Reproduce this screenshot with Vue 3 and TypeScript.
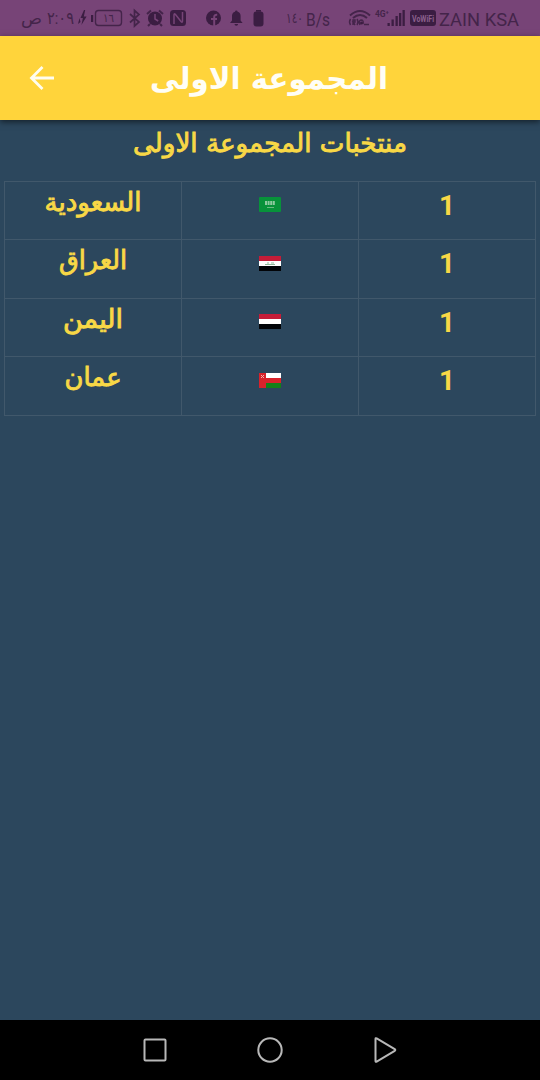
<script setup lang="ts">
interface Team {
  name: string
  width: number
  flag: 'sa' | 'iq' | 'ye' | 'om'
  count: number
}

const teams: Team[] = [
  { name: 'السعودية', width: 97, flag: 'sa', count: 1 },
  { name: 'العراق', width: 68, flag: 'iq', count: 1 },
  { name: 'اليمن', width: 60, flag: 'ye', count: 1 },
  { name: 'عمان', width: 57, flag: 'om', count: 1 },
]
</script>

<template>
  <div class="screen">
    <div class="status">
      <svg class="cluster" width="180" height="36" viewBox="10 0 180 36">
        <text x="21" y="24" font-size="17" textLength="21" lengthAdjust="spacingAndGlyphs">ص</text>
        <text x="47" y="24" font-size="17" textLength="27" lengthAdjust="spacingAndGlyphs" direction="ltr">٢:٠٩</text>
        <path class="solid" d="M84 10l-3.500 8h2.400l-1.500 7 5.200-8.500h-2.800l1.400-6.500zM79.500 18l-1.500 6 2.500-2z" />
        <path class="solid" d="M91 15h2.200v7H91z" />
        <rect class="line" x="95.500" y="10.500" width="26" height="15" rx="3" />
        <text x="103" y="22" font-size="12" textLength="11" lengthAdjust="spacingAndGlyphs">١٦</text>
        <path class="line bold" d="M130 14l9 8-4.500 4V10.500l4.500 4-9 8" />
        <circle class="solid" cx="155" cy="18.500" r="7" />
        <path class="line thick" d="M147 14l4-3.500M163 14l-4-3.500M150 24l-2 2M160 24l2 2" />
        <path class="cut" d="M155 14v5l3.200 2" />
        <rect class="solid" x="170" y="10" width="16" height="16" rx="3.500" />
        <path class="cut" d="M174 24v-9q0-2 1.500-.5l5.500 7q1.500 1.500 1.500-.5v-9" />
      </svg>
      <svg class="cluster" width="70" height="36" viewBox="200 0 70 36">
        <circle class="solid" cx="213.500" cy="18" r="7.500" />
        <path class="cut thick" d="M214.200 26v-9q0-2.500 3-2.300M211 19h6" />
        <path class="solid" d="M230 23l2-2.500V16q0-3.500 3-4.300a1.300 1.300 0 0 1 2.600 0q3 .8 3 4.300v4.500l2 2.500zM234.500 24h3.600a1.800 1.800 0 0 1-3.600 0z" />
        <path class="solid" d="M256 10h5v1.700h-5z" />
        <rect class="solid" x="253.500" y="11.500" width="10" height="15" rx="3" />
      </svg>
      <svg class="cluster" width="260" height="36" viewBox="280 0 260 36">
        <text x="286" y="23" font-size="14" textLength="17" lengthAdjust="spacingAndGlyphs">١٤٠</text>
        <text x="306" y="25.500" font-size="17.500" textLength="24" lengthAdjust="spacingAndGlyphs">B/s</text>
        <path class="line thick" d="M350 15.500q10-9 20 0M353 18q7-6 14 0" />
        <path class="line" d="M350.500 19q-2 3 0 6M353 25v-5h2v2h-2l2 3M357 19q2 3 0 6M360 25q-2-4 1-5 3 0 2 4M364 24.500h5" />
        <circle class="solid" cx="361.500" cy="23" r="1.500" />
        <text class="tiny" x="375" y="17" textLength="14" lengthAdjust="spacingAndGlyphs">4G⁺</text>
        <path class="solid" d="M387.500 23h2.300v3h-2.300zM391.500 19.500h2.300V26h-2.300zM395.500 16h2.300v10h-2.300zM399 13h2.300v13H399zM402.500 10h2.300v16h-2.300z" />
        <rect class="solid" x="410" y="10" width="26" height="16" rx="3" />
        <text class="badge" x="412" y="22" textLength="22" lengthAdjust="spacingAndGlyphs">VoWiFi</text>
        <text x="439" y="25.500" font-size="18.500" textLength="80" lengthAdjust="spacingAndGlyphs">ZAIN KSA</text>
      </svg>
    </div>

    <header class="bar">
      <svg class="back" width="26" height="26" viewBox="0 0 26 26">
        <path d="M25 13H3M13.500 2L2.500 13l11 11" />
      </svg>
      <svg class="title" width="270" height="84" viewBox="0 0 270 84">
        <text x="135" y="53" textLength="238" lengthAdjust="spacingAndGlyphs">المجموعة الاولى</text>
      </svg>
    </header>

    <main class="content">
      <svg class="subtitle" width="300" height="60" viewBox="0 0 300 60">
        <text x="150" y="32" textLength="274" lengthAdjust="spacingAndGlyphs">منتخبات المجموعة الاولى</text>
      </svg>
      <div class="table">
        <div v-for="team in teams" :key="team.flag" class="row">
          <div class="cell">
            <svg class="name" width="140" height="57" viewBox="0 0 140 57">
              <text x="70" y="29" :textLength="team.width" lengthAdjust="spacingAndGlyphs">{{ team.name }}</text>
            </svg>
          </div>
          <div class="cell">
            <svg class="flag" width="22" height="15" viewBox="0 0 22 15">
              <template v-if="team.flag === 'sa'">
                <rect width="22" height="15" rx="1" fill="#07923a" />
                <path d="M6 5h10M6 7h10" stroke="#b9ddc1" stroke-width="1.500" stroke-dasharray="2 .6" />
                <path d="M8 10.500h7" stroke="#83c493" stroke-width=".8" />
              </template>
              <template v-else-if="team.flag === 'om'">
                <rect width="22" height="5" fill="#fff" />
                <rect y="5" width="22" height="5" fill="#d8222b" />
                <rect y="10" width="22" height="5" fill="#148019" />
                <rect width="7" height="15" fill="#d8222b" />
                <path d="M2 2l3 3M5 2L2 5" stroke="#f4b5b2" stroke-width="1" />
              </template>
              <template v-else>
                <rect width="22" height="5" fill="#c51c38" />
                <rect y="5" width="22" height="5" fill="#fff" />
                <rect y="10" width="22" height="5" fill="#020408" />
                <path v-if="team.flag === 'iq'" d="M6 8.500h10M8 7h2m2 0h3" stroke="#92b99d" stroke-width="1.200" />
              </template>
            </svg>
          </div>
          <div class="cell count">{{ team.count }}</div>
        </div>
      </div>
    </main>

    <nav class="nav">
      <svg width="28" height="28" viewBox="0 0 28 28"><rect x="3.500" y="3.500" width="21" height="21" rx="1" /></svg>
      <svg width="28" height="28" viewBox="0 0 28 28"><circle cx="14" cy="14" r="11.700" /></svg>
      <svg width="28" height="28" viewBox="0 0 28 28"><path d="M4.500 3v22q0 1.200 1.200.6l18-10.800q1.200-.8 0-1.600L5.700 2.400Q4.500 1.800 4.500 3z" /></svg>
    </nav>
  </div>
</template>

<style>
body {
  margin: 0;
}
</style>

<style scoped>
.screen {
  width: 540px;
  height: 1080px;
  display: flex;
  flex-direction: column;
  background: #2c475d;
  font-family: Roboto, "DejaVu Sans", sans-serif;
  overflow: hidden;
}
svg {
  display: block;
  flex: none;
  overflow: visible;
}
.status {
  height: 36px;
  flex: none;
  display: flex;
  gap: 10px;
  padding-left: 10px;
  background: #774477;
}
.cluster text {
  fill: #44244a;
  font-family: Roboto, "DejaVu Sans", sans-serif;
  font-weight: 400;
}
.cluster .tiny {
  font-size: 9px;
  font-weight: 700;
}
.cluster .badge {
  font-size: 9px;
  font-weight: 700;
  fill: #8b608d;
}
.solid {
  fill: #3b1d42;
}
.line {
  fill: none;
  stroke: #44244a;
  stroke-width: 1.4;
}
.bold {
  stroke-width: 1.7;
}
.cut {
  fill: none;
  stroke: #774477;
  stroke-width: 1.5;
}
.thick {
  stroke-width: 2;
}
.bar {
  height: 84px;
  flex: none;
  display: flex;
  align-items: center;
  background: #ffd43b;
  box-shadow: 0 2px 6px rgba(0, 0, 0, 0.55);
  z-index: 1;
}
.back {
  margin-left: 29px;
}
.back path {
  fill: none;
  stroke: #fffdf0;
  stroke-width: 2.8;
}
.title {
  margin-left: 79px;
}
.title text,
.subtitle text,
.name text {
  font-family: "DejaVu Sans", sans-serif;
  text-anchor: middle;
  direction: rtl;
}
.title text {
  font-size: 30px;
  font-weight: 700;
  fill: #fffef6;
}
.content {
  flex: 1;
  display: flex;
  flex-direction: column;
  align-items: center;
}
.subtitle text,
.name text {
  font-size: 26px;
  font-weight: 400;
  fill: #f8d846;
  stroke: #f8d846;
  stroke-width: 0.9;
}
.table {
  width: 532px;
  height: 235.5px;
  box-sizing: border-box;
  margin-top: 0.6px;
  display: grid;
  grid-template-rows: 58px 59px 58px 59px;
  border-top: 1px solid #41586b;
  border-left: 1px solid #41586b;
}
.row {
  display: grid;
  grid-template-columns: repeat(3, 1fr);
}
.cell {
  display: flex;
  justify-content: center;
  border-right: 1px solid #41586b;
  border-bottom: 1px solid #41586b;
  box-sizing: border-box;
}
.flag {
  margin-top: 15px;
}
.row:nth-child(even) .flag {
  margin-top: 16px;
}
.count {
  font: 700 28px/48px Roboto, "Noto Sans", sans-serif;
  color: #f8d846;
}
.nav {
  height: 60px;
  flex: none;
  display: flex;
  justify-content: center;
  align-items: center;
  gap: 87px;
  background: #000;
}
.nav svg {
  fill: none;
  stroke: #b8b8b8;
  stroke-width: 2;
}
</style>
